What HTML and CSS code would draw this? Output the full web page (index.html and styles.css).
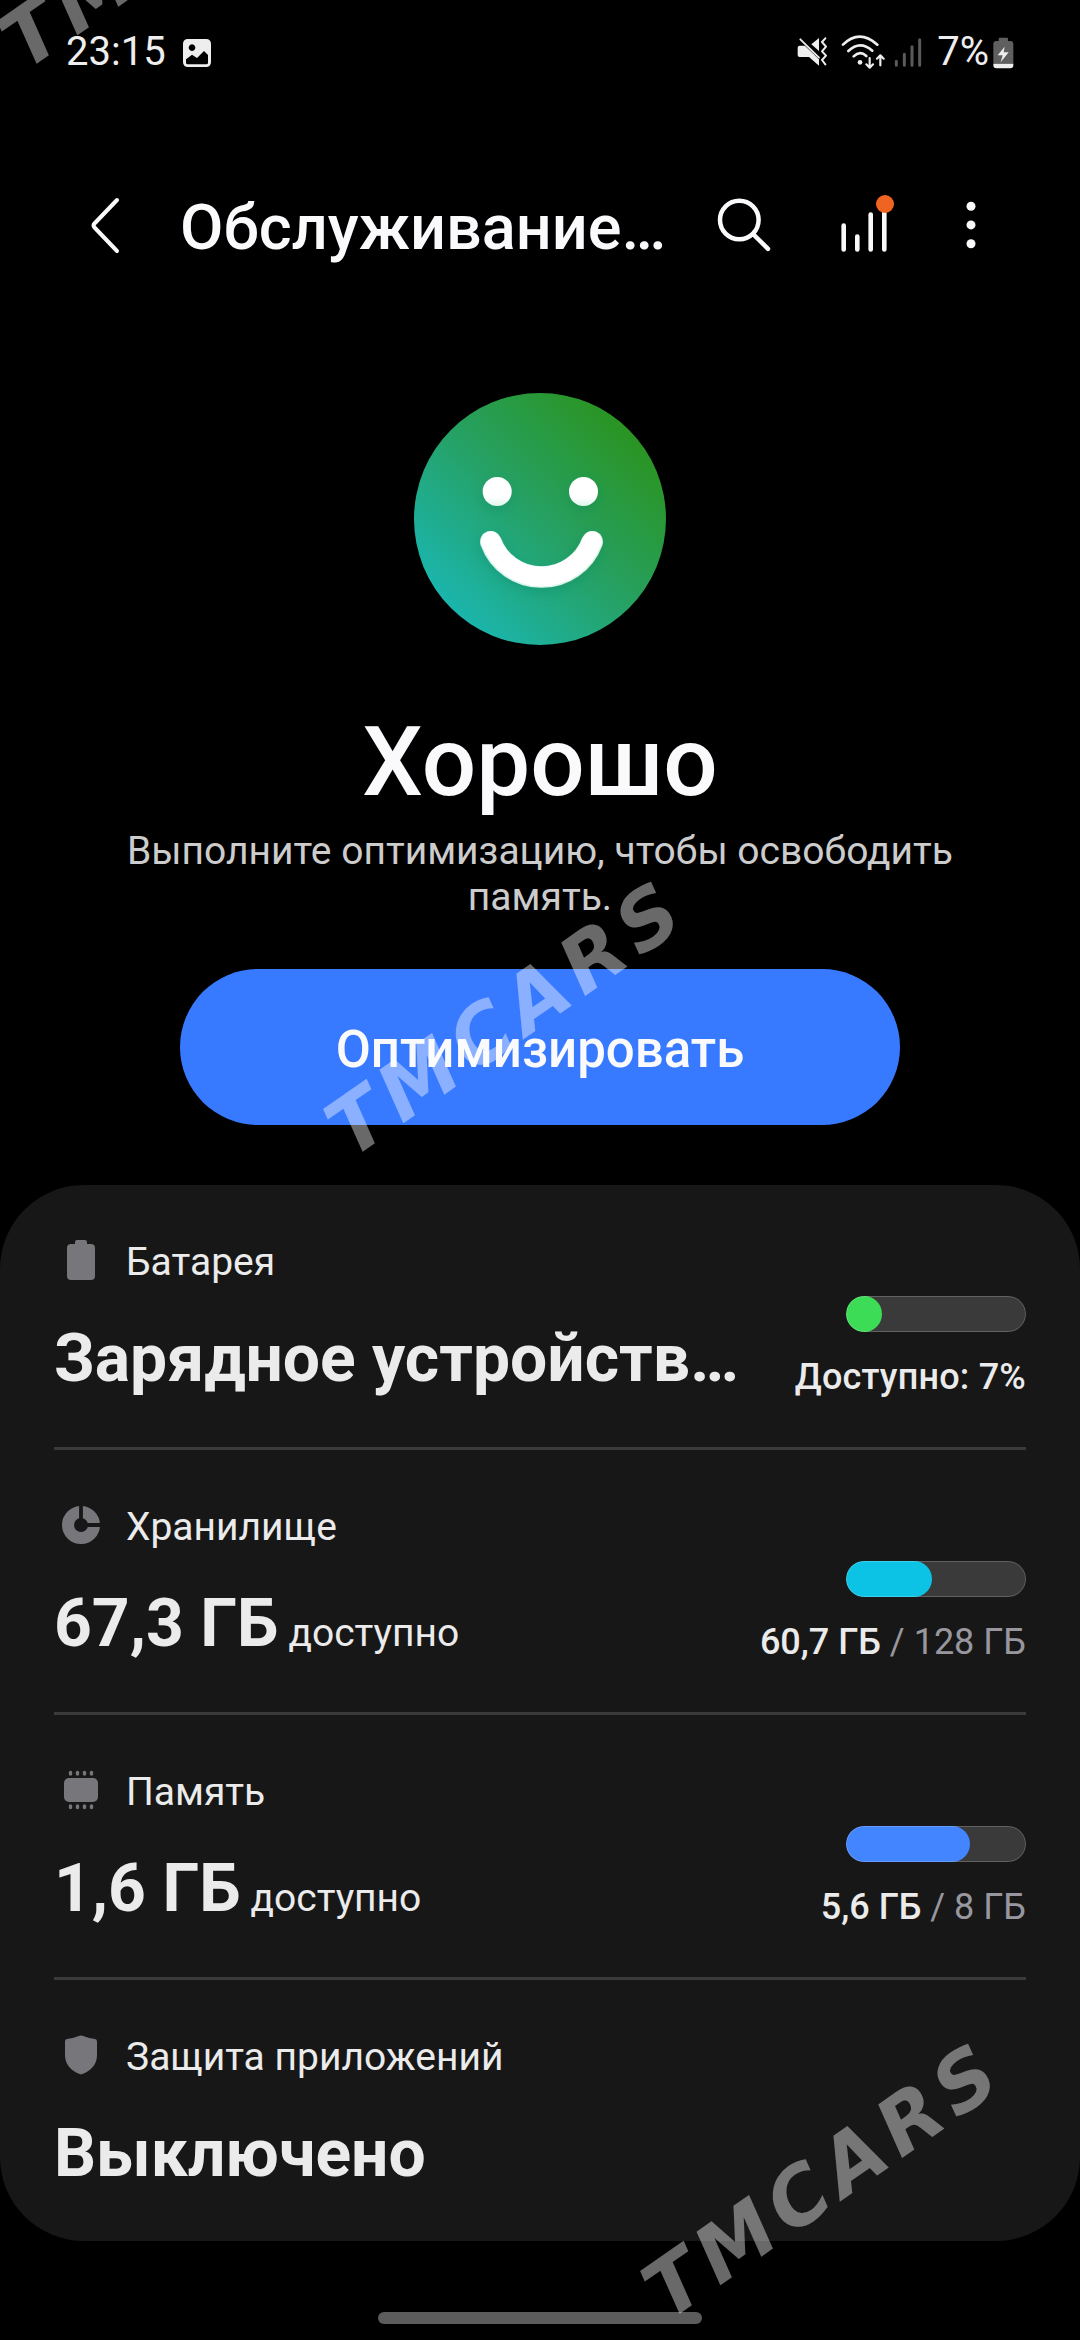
FILE: index.html
```html
<!DOCTYPE html>
<html lang="ru">
<head>
<meta charset="utf-8">
<title>Обслуживание устройства</title>
<link rel="stylesheet" href="styles.css">
</head>
<body>
<div class="screen">
  <header class="status">
    <span class="clock">23:15</span>
    <svg class="status-photo" width="28" height="28" viewBox="0 0 84 84"><path fill="#eee" fill-rule="evenodd" d="M14 0H70A14 14 0 0 1 84 14V70A14 14 0 0 1 70 84H14A14 14 0 0 1 0 70V14A14 14 0 0 1 14 0ZM27 16a10 10 0 1 0 .1 0ZM9 61V71Q9 76 14 76H70Q75 76 75 71V48L63 36L42 57L27 47Z"/></svg>
    <span class="spacer"></span>
    <svg class="status-mute" width="32" height="30" viewBox="0 0 96 90"><g fill="#eee"><path d="M8 26H24L66 65V86L36 60H8Q2 60 2 54V32Q2 26 8 26ZM66 3V42L43 22Z"/></g><path d="M10 7L72 68" stroke="#000" stroke-width="7"/><path d="M10 7L66 62" stroke="#eee" stroke-width="5.5" stroke-linecap="round"/><path d="M85 4L75 15L87 29L75 43L87 56L75 69L85 82" fill="none" stroke="#eee" stroke-width="6" stroke-linecap="round" stroke-linejoin="round"/></svg>
    <svg class="status-wifi" width="44" height="36" viewBox="0 0 132 108"><g fill="none" stroke="#eee" stroke-width="8" stroke-linecap="round" stroke-linejoin="round"><path d="M6 32Q55-16 109 32"/><path d="M22 51Q57 18 94 50"/><path d="M38 67Q57 48 76 66"/><path stroke-width="6.500" d="M86 72V101M76 91L86 101L96 91M118 94V64M108 74L118 64L128 74"/></g><circle cx="57" cy="85" r="7" fill="#eee"/></svg>
    <svg class="status-signal" width="28" height="30" viewBox="0 0 84 90"><path d="M7 70V82M31 49V82M54 26V82M77 5V82" stroke="#5a5a5a" stroke-width="9" stroke-linecap="round"/></svg>
    <span class="percent">7%</span>
    <svg class="status-battery" width="21" height="32" viewBox="0 0 63 96"><path fill="#5f5f5f" d="M20 2H42Q45 2 45 6V12H52Q61 12 61 21V80H1V21Q1 12 10 12H17V6Q17 2 20 2Z"/><path fill="#eee" d="M1 80H61V85Q61 94 52 94H10Q1 94 1 85ZM35 29L14 55H29L23 76L47 46H32Z"/></svg>
  </header>

  <nav class="appbar">
    <svg class="back" width="32" height="60" viewBox="0 0 32 60"><path d="M28 5L5.500 28.500Q3.500 30.500 5.500 32.500L28 56" fill="none" stroke="#fafafc" stroke-width="4" stroke-linecap="round" stroke-linejoin="round"/></svg>
    <h1 class="title">Обслуживание…</h1>
    <svg class="search" width="56" height="56" viewBox="0 0 56 56"><g fill="none" stroke="#fafafc" stroke-width="4.500" stroke-linecap="round"><circle cx="23.300" cy="23" r="19.300"/><path d="M37.500 37.500L52 51.800"/></g></svg>
    <svg class="chart" width="56" height="60" viewBox="0 0 56 60"><path d="M5.700 30.500V54.500M19.300 41.500V54.500M32.700 19.500V54.500M46.300 12V54.500" stroke="#fafafc" stroke-width="4.600" stroke-linecap="round"/><circle cx="47" cy="9" r="9" fill="#ee6420"/></svg>
    <svg class="more" width="10" height="48" viewBox="0 0 10 48"><g fill="#fafafc"><circle cx="5" cy="5.200" r="4.500"/><circle cx="5" cy="23.900" r="4.500"/><circle cx="5" cy="42.800" r="4.500"/></g></svg>
  </nav>

  <section class="hero">
    <svg width="252" height="252" viewBox="0 0 252 252">
      <defs>
        <linearGradient id="face" x1="0.150" y1="0.850" x2="0.850" y2="0.150"><stop offset="0" stop-color="#1bb5ac"/><stop offset="0.500" stop-color="#26a164"/><stop offset="1" stop-color="#2a9423"/></linearGradient>
        <linearGradient id="eye" x1="0" y1="0" x2="0" y2="1"><stop offset="0.700" stop-color="#fff"/><stop offset="1" stop-color="#dcf5ea"/></linearGradient>
        <filter id="glow" x="-30%" y="-30%" width="160%" height="160%"><feDropShadow dx="0" dy="4" stdDeviation="7" flood-color="#0d8060" flood-opacity="0.350"/></filter>
      </defs>
      <circle cx="126" cy="126" r="126" fill="url(#face)"/>
      <g filter="url(#glow)">
        <circle cx="83.200" cy="98.500" r="14.500" fill="url(#eye)"/>
        <circle cx="169.500" cy="98.500" r="14.500" fill="url(#eye)"/>
        <path d="M76.800 148.700A54 54 0 0 0 178.200 148.700" fill="none" stroke="#dcf5ec" stroke-width="21.500" stroke-linecap="round"/>
        <path d="M76.800 148A54 54 0 0 0 178.200 148" fill="none" stroke="#fff" stroke-width="19.500" stroke-linecap="round"/>
      </g>
    </svg>
    <h2 class="verdict">Хорошо</h2>
    <p class="advice">Выполните оптимизацию, чтобы освободить память.</p>
    <button class="optimize">Оптимизировать</button>
  </section>

  <main class="card">
    <section class="row">
      <div class="info">
        <div class="label"><svg width="54" height="44" viewBox="0 0 54 44"><path fill="#77777b" d="M23 0H31Q33 0 33 2V4H37Q41 4 41 8V36Q41 40 37 40H17Q13 40 13 36V8Q13 4 17 4H21V2Q21 0 23 0Z"/></svg><span>Батарея</span></div>
        <div class="value">Зарядное устройств…</div>
      </div>
      <div class="usage">
        <div class="meter"><div class="fill green" style="width:36px"></div></div>
        <div class="amount charge"><b>Доступно: 7%</b></div>
      </div>
    </section>
    <section class="row">
      <div class="info">
        <div class="label"><svg width="54" height="44" viewBox="0 0 54 44"><circle cx="27" cy="20" r="13" fill="none" stroke="#77777b" stroke-width="12"/><path d="M27 0V14M32 20H47" stroke="#171717" stroke-width="3.800"/></svg><span>Хранилище</span></div>
        <div class="value">67,3 ГБ<small>доступно</small></div>
      </div>
      <div class="usage">
        <div class="meter"><div class="fill cyan" style="width:86px"></div></div>
        <div class="amount"><b>60,7 ГБ</b> / 128 ГБ</div>
      </div>
    </section>
    <section class="row">
      <div class="info">
        <div class="label"><svg width="54" height="44" viewBox="0 0 54 44"><rect x="10" y="8" width="34" height="24" rx="5" fill="#77777b"/><path d="M16.500 2.500V4M23.500 2.500V4M30.500 2.500V4M37.500 2.500V4M16.500 36V37.500M23.500 36V37.500M30.500 36V37.500M37.500 36V37.500" stroke="#77777b" stroke-width="3.400" stroke-linecap="round"/></svg><span>Память</span></div>
        <div class="value">1,6 ГБ<small>доступно</small></div>
      </div>
      <div class="usage">
        <div class="meter"><div class="fill blue" style="width:124px"></div></div>
        <div class="amount"><b>5,6 ГБ</b> / 8 ГБ</div>
      </div>
    </section>
    <section class="row">
      <div class="info">
        <div class="label"><svg width="54" height="44" viewBox="0 0 54 44"><path fill="#77777b" d="M25.500 .8Q27 .2 28.500 .8Q35 3.500 41 4Q43 4.400 43 6.500V20Q43 33 28.500 39Q27 39.600 25.500 39Q11 33 11 20V6.500Q11 4.400 13 4Q19 3.500 25.500 .8Z"/></svg><span>Защита приложений</span></div>
        <div class="value">Выключено</div>
      </div>
    </section>
  </main>

  <div class="home-handle"></div>
  <div class="watermark mark-top">TMCARS</div>
  <div class="watermark mark-middle">TMCARS</div>
  <div class="watermark mark-bottom">TMCARS</div>
</div>
</body>
</html>
```
FILE: styles.css
```css
* { box-sizing: border-box; }
html, body { margin: 0; background: #000; }
svg { display: block; flex: none; }

.screen {
  position: relative;
  display: flex;
  flex-direction: column;
  width: 1080px;
  height: 2340px;
  overflow: hidden;
  background: #000;
  color: #fafafc;
  font-family: Roboto, "Noto Sans", sans-serif;
}

/* status bar */
.status {
  display: flex;
  align-items: center;
  height: 103px;
  padding: 0 66px;
  color: #eee;
  font-size: 40px;
  line-height: 48px;
}
.status-photo { margin: 3px 0 0 17px; }
.spacer { flex: 1; }
.status-mute { margin-right: 12px; }
.status-wifi { margin-right: 9px; }
.status-signal { margin: 2px 15px 0 0; }
.percent { margin-right: 4px; }
.status-battery { margin-top: 2px; }

/* app bar */
.appbar {
  display: flex;
  align-items: center;
  height: 244px;
  padding: 0 104px 0 89px;
}
.title {
  width: 500px;
  margin: 5px 0 0 59px;
  font-size: 63px;
  font-weight: 500;
  line-height: 74px;
  white-space: nowrap;
}
.search { margin: 0 0 0 36px; }
.chart { margin-left: 66px; margin-top: -1px; }
.more { margin-left: 72px; }

/* overall state */
.hero {
  display: flex;
  flex-direction: column;
  align-items: center;
  padding-top: 46px;
}
.verdict {
  margin: 61px 0 10px;
  font-size: 96px;
  font-weight: 500;
  line-height: 112px;
}
.advice {
  width: 880px;
  margin: 0 0 49px;
  color: #ccc;
  font-size: 39px;
  line-height: 46px;
  text-align: center;
}
.optimize {
  width: 720px;
  height: 156px;
  padding: 5px 0 0;
  border: 0;
  border-radius: 78px;
  background: #387aff;
  color: #fafafc;
  font: 500 51px/60px Roboto, "Noto Sans", sans-serif;
}

/* details card */
.card {
  height: 1056px;
  margin-top: 60px;
  padding: 0 54px;
  border-radius: 84px;
  background: #171717;
  color: #ebebeb;
}
.row {
  display: flex;
  justify-content: space-between;
  align-items: flex-end;
  height: 265px;
  padding-bottom: 49px;
  border-bottom: 3px solid #3a3a3a;
}
.row:last-child { border-bottom-color: transparent; }
.label {
  display: flex;
  gap: 18px;
  margin-bottom: 36px;
  font-size: 39px;
  line-height: 44px;
}
.value {
  height: 78px;
  font-size: 66px;
  font-weight: 700;
  line-height: 78px;
  white-space: nowrap;
}
.value small {
  margin-left: 10px;
  font-size: 39px;
  font-weight: 400;
  line-height: 1;
}
.usage {
  display: flex;
  flex-direction: column;
  align-items: flex-end;
  gap: 24px;
}
.meter {
  position: relative;
  width: 180px;
  height: 36px;
  border-radius: 18px;
  background: #3a3a3a;
  overflow: hidden;
}
.meter::after {
  content: "";
  position: absolute;
  inset: 0;
  border: 1px solid rgba(255, 255, 255, 0.2);
  border-radius: 18px;
}
.fill { height: 36px; border-radius: 18px; }
.green { background: #3ddc57; }
.cyan { background: #0cc3e5; }
.blue { background: #4285ff; }
.amount {
  color: #98979f;
  font-size: 36px;
  line-height: 42px;
  white-space: nowrap;
}
.charge { letter-spacing: 0.2px; }
.amount b { color: #ebebeb; font-weight: 500; }

.home-handle {
  width: 324px;
  height: 12px;
  margin: 71px auto 0;
  border-radius: 6px;
  background: #5c5c5c;
}

/* diagonal marks over the whole screen */
.watermark {
  position: absolute;
  color: rgba(255, 255, 255, 0.41);
  font: italic 700 79px/80px "DejaVu Sans", sans-serif;
  letter-spacing: 8px;
  white-space: nowrap;
  transform: rotate(-35deg);
  transform-origin: 27px 68px;
  pointer-events: none;
}
.mark-top { left: 21px; top: -11px; }
.mark-middle { left: 347px; top: 1077px; }
.mark-bottom { left: 664px; top: 2239px; }
```
